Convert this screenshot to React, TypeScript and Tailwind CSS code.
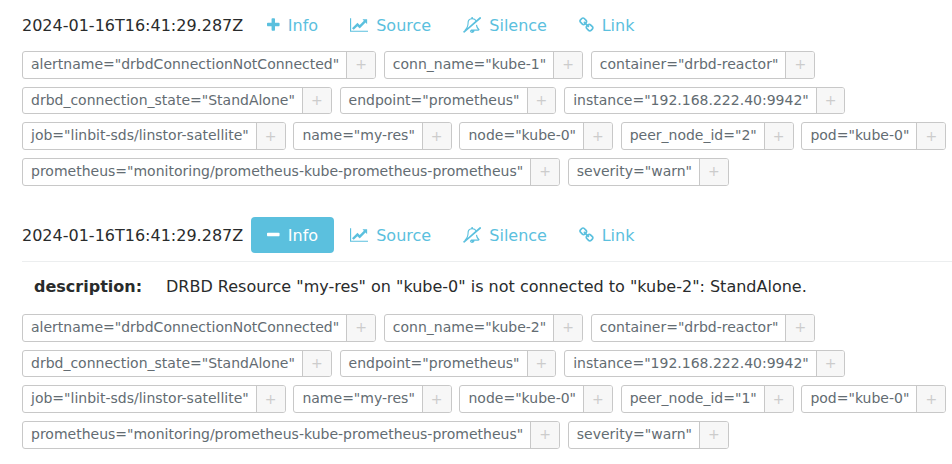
import React from "react";

type IconName = "plus" | "minus" | "chart" | "silence" | "link";

const icons: Record<IconName, { left: number; width: number; path: string }> = {
  plus: {
    left: 192,
    width: 1408,
    path: "M1600 736v192q0 40-28 68t-68 28h-416v416q0 40-28 68t-68 28h-192q-40 0-68-28t-28-68v-416h-416q-40 0-68-28t-28-68v-192q0-40 28-68t68-28h416v-416q0-40 28-68t68-28h192q40 0 68 28t28 68v416h416q40 0 68 28t28 68z",
  },
  minus: {
    left: 192,
    width: 1408,
    path: "M1600 736v192q0 40-28 68t-68 28h-1216q-40 0-68-28t-28-68v-192q0-40 28-68t68-28h1216q40 0 68 28t28 68z",
  },
  chart: {
    left: 0,
    width: 2048,
    path: "M2048 1536v128h-2048v-1536h128v1408h1920zm-128-1248v435q0 21-19.5 29.5t-35.5-7.5l-121-121-633 633q-10 10-23 10t-23-10l-233-233-416 416-192-192 585-585q10-10 23-10t23 10l233 233 464-464-121-121q-16-16-7.5-35.5t29.5-19.5h435q14 0 23 9t9 23z",
  },
  silence: {
    left: 0,
    width: 2048,
    path: "M1056 1696q0-16-16-16-59 0-101.5-42.5t-42.5-101.5q0-16-16-16t-16 16q0 73 51.5 124.5t124.5 51.5q16 0 16-16zm-553-475l877-760q-42-88-132.5-146.5t-223.5-58.5q-93 0-169.5 31.5t-121.5 80.5-69 103-24 105q0 384-137 645zm1353 187q0 52-38 90t-90 38h-448q0 106-75 181t-181 75-180.5-74.5-75.5-180.5l149-129h757q-166-187-227-459l111-97q61 356 298 556zm86-1401l84 96q8 10 7.5 23.5t-10.5 22.5l-1872 1622q-10 8-23.5 7t-21.5-11l-84-96q-8-10-7.5-23.5t10.5-21.5l186-161q-19-32-19-66 50-42 91-88t85-119.5 74.5-158.5 50-206 19.5-260q0-152 117-282.5t307-158.5q-8-19-8-39 0-40 28-68t68-28 68 28 28 68q0 20-8 39 124 18 219 82.5t148 157.5l418-363q10-8 23.5-7t21.5 11z",
  },
  link: {
    left: 64,
    width: 1664,
    path: "M1520 1216q0-40-28-68l-208-208q-28-28-68-28-42 0-72 32 3 3 19 18.5t21.5 21.5 15 19 13 25.5 3.5 27.5q0 40-28 68t-68 28q-15 0-27.5-3.5t-25.5-13-19-15-21.5-21.5-18.5-19q-33 31-33 73 0 40 28 68l206 207q27 27 68 27 40 0 68-26l147-146q28-28 28-67zm-703-705q0-40-28-68l-206-207q-28-28-68-28-39 0-68 27l-147 146q-28 28-28 67 0 40 28 68l208 208q27 27 68 27 42 0 72-31-3-3-19-18.5t-21.5-21.5-15-19-13-25.5-3.5-27.5q0-40 28-68t68-28q15 0 27.5 3.5t25.5 13 19 15 21.5 21.5 18.5 19q33-31 33-73zm895 705q0 120-85 203l-147 146q-83 83-203 83-121 0-204-85l-206-207q-83-83-83-203 0-123 88-209l-88-88q-86 88-208 88-120 0-204-84l-208-208q-84-84-84-204t85-203l147-146q83-83 203-83 121 0 204 85l206 207q83 83 83 203 0 123-88 209l88 88q86-88 208-88 120 0 204 84l208 208q84 84 84 204z",
  },
};

function Icon({ name }: { name: IconName }) {
  const { left, width, path } = icons[name];
  return (
    <svg
      viewBox={`${left} 0 ${width} 1792`}
      className="mb-0.5 h-4 shrink-0"
      style={{ width: (width / 1792) * 16 }}
      fill="currentColor"
      aria-hidden="true"
    >
      <path d={path} />
    </svg>
  );
}

function Action({ icon, label, active = false }: { icon: IconName; label: string; active?: boolean }) {
  return (
    <button
      className={`flex h-9 items-center gap-[7.85px] rounded px-4 pt-0.5 ${
        active ? "bg-[#5bc0de] text-white" : "text-[#5bc0de]"
      }`}
    >
      <Icon name={icon} />
      {label}
    </button>
  );
}

function Label({ text }: { text: string }) {
  return (
    <div className="flex h-[27.6px] rounded-[3px] border border-[#c8c8c8] text-sm leading-[25px] whitespace-nowrap">
      <span className="px-2 text-[#636c72]">{text}</span>
      <button className="-ml-px rounded-r-[2px] border-l border-[#c8c8c8] bg-[#f7f7f7] px-2 text-[#ccc]">+</button>
    </div>
  );
}

function Alert({ kube, peer, description }: { kube: string; peer: string; description?: string }) {
  const rows = [
    ['alertname="drbdConnectionNotConnected"', `conn_name="${kube}"`, 'container="drbd-reactor"'],
    ['drbd_connection_state="StandAlone"', 'endpoint="prometheus"', 'instance="192.168.222.40:9942"'],
    ['job="linbit-sds/linstor-satellite"', 'name="my-res"', 'node="kube-0"', `peer_node_id="${peer}"`, 'pod="kube-0"'],
    ['prometheus="monitoring/prometheus-kube-prometheus-prometheus"', 'severity="warn"'],
  ];
  return (
    <section>
      <header className="flex h-9 items-center">
        <span className="mr-2 w-[221.4px] pt-0.5 whitespace-nowrap">2024-01-16T16:41:29.287Z</span>
        <div className="flex">
          <Action icon={description ? "minus" : "plus"} label="Info" active={!!description} />
          <Action icon="chart" label="Source" />
          <Action icon="silence" label="Silence" />
          <Action icon="link" label="Link" />
        </div>
      </header>
      {description && (
        <dl className="mt-2 flex h-[49px] items-center border-t border-[#eceeef] pt-0.5 pl-3">
          <dt className="w-[132px] font-bold">description:</dt>
          <dd>{description}</dd>
        </dl>
      )}
      <div className={`flex flex-col gap-2 ${description ? "mt-[4.2px]" : "mt-[8.2px]"}`}>
        {rows.map((row) => (
          <div key={row[0]} className="flex gap-[7.92px]">
            {row.map((text) => (
              <Label key={text} text={text} />
            ))}
          </div>
        ))}
      </div>
    </section>
  );
}

export default function App() {
  return (
    <main className="flex h-[464px] w-[952px] flex-col gap-[31.4px] overflow-hidden bg-white pt-[7px] pl-[22px] font-['DejaVu_Sans',sans-serif] text-base text-[#292b2c]">
      <Alert kube="kube-1" peer="2" />
      <Alert
        kube="kube-2"
        peer="1"
        description={'DRBD Resource "my-res" on "kube-0" is not connected to "kube-2": StandAlone.'}
      />
    </main>
  );
}
